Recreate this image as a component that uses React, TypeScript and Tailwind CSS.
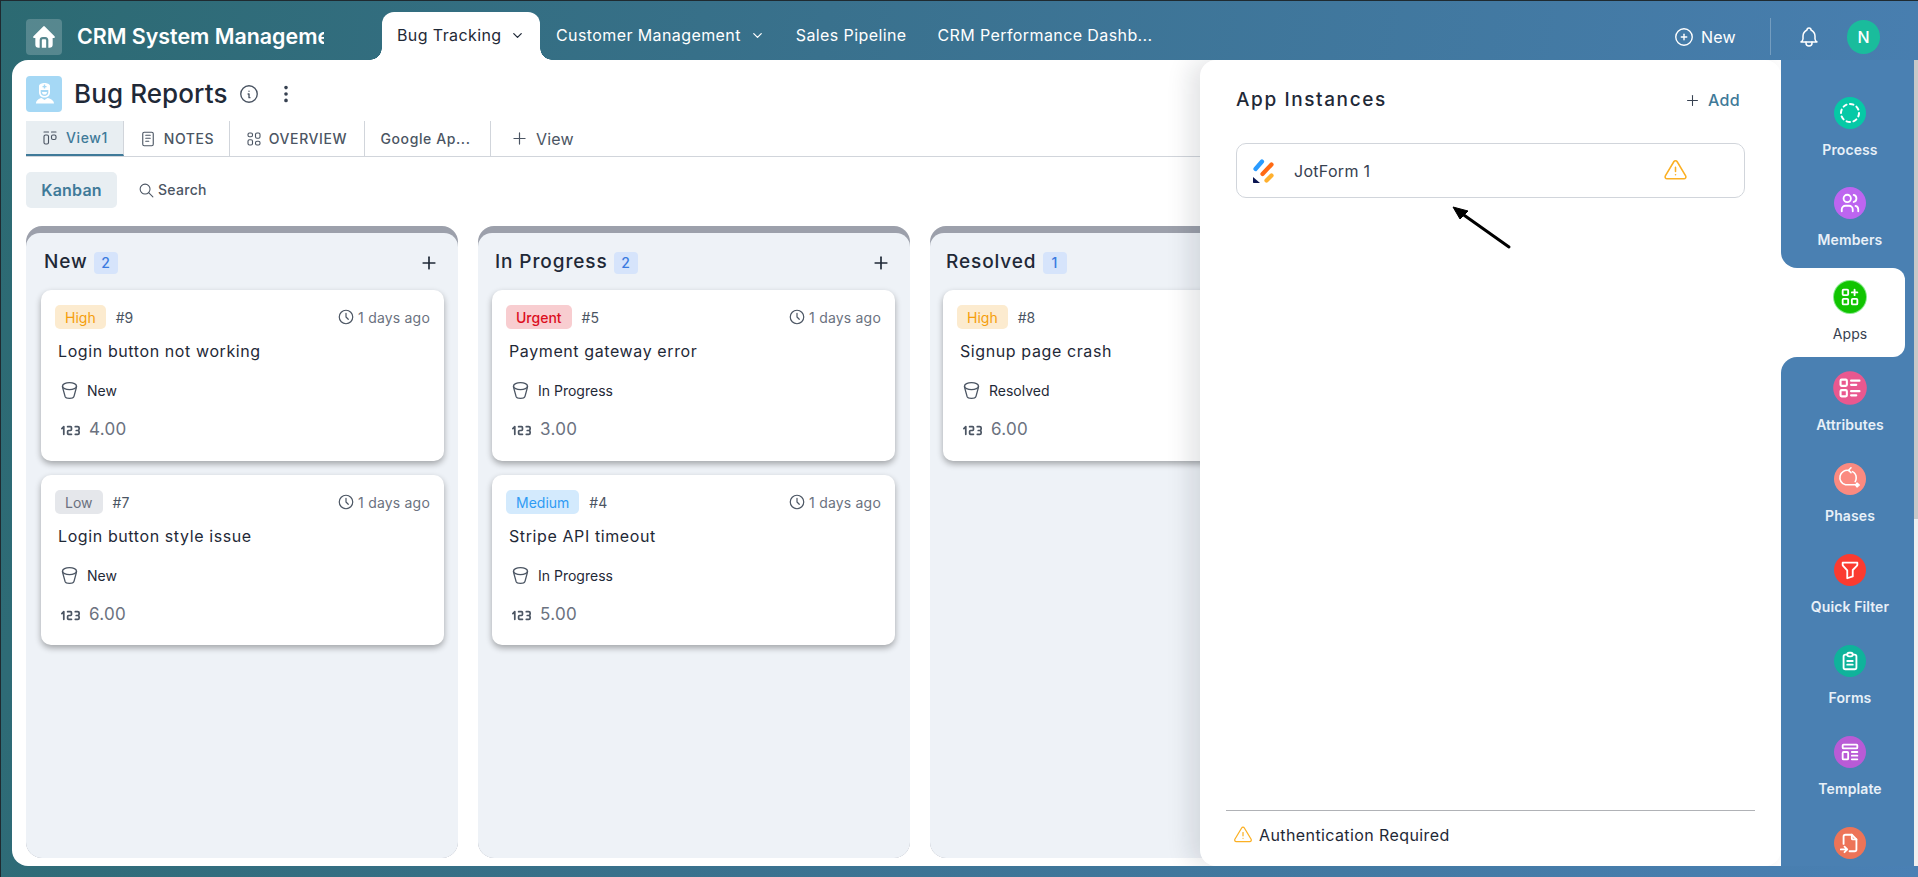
import React from "react";
import {
  TbAlertTriangle,
  TbApps,
  TbBell,
  TbBucket,
  TbChevronDown,
  TbCircleDashed,
  TbCirclePlus,
  TbClipboardText,
  TbClock,
  TbDotsVertical,
  TbFileImport,
  TbFilter,
  TbHomeFilled,
  TbInfoCircle,
  TbLayout2,
  TbLayoutKanban,
  TbListDetails,
  TbNotes,
  TbNumber123,
  TbPlus,
  TbSearch,
  TbTemplate,
  TbUsers,
} from "react-icons/tb";

type Card = { priority: string; chip: string; id: string; title: string; status: string; value: string };

const columns: { name: string; count: number; pad: string; cards: Card[] }[] = [
  {
    name: "New",
    count: 2,
    pad: "pl-[15px]",
    cards: [
      { priority: "High", chip: "bg-[#fcebcf] text-[#f59e0b]", id: "#9", title: "Login button not working", status: "New", value: "4.00" },
      { priority: "Low", chip: "bg-[#e5e7eb] text-[#6b7280]", id: "#7", title: "Login button style issue", status: "New", value: "6.00" },
    ],
  },
  {
    name: "In Progress",
    count: 2,
    pad: "pl-[14px]",
    cards: [
      { priority: "Urgent", chip: "bg-[#f8cdd0] font-medium text-[#dc0f1e]", id: "#5", title: "Payment gateway error", status: "In Progress", value: "3.00" },
      { priority: "Medium", chip: "bg-[#d3eafd] text-[#2f9bf4]", id: "#4", title: "Stripe API timeout", status: "In Progress", value: "5.00" },
    ],
  },
  {
    name: "Resolved",
    count: 1,
    pad: "pl-[13px]",
    cards: [{ priority: "High", chip: "bg-[#fcebcf] text-[#f59e0b]", id: "#8", title: "Signup page crash", status: "Resolved", value: "6.00" }],
  },
];

function NurseIcon() {
  return (
    <svg viewBox="0 0 36 36" className="h-9 w-9">
      <path d="M13 10 C13 8 16 7 18.5 7 C21 7 24 8 24 10 L24 16.5 C24 19.5 21.5 21.5 18.5 21.5 C15.5 21.5 13 19.5 13 16.5 Z" fill="#fff" />
      <path d="M14.7 14 H22.3 V16.5 C22.3 18.6 20.6 20 18.5 20 C16.4 20 14.7 18.6 14.7 16.5 Z" fill="#a5d8f5" />
      <path d="M16 16 H21 C21 17.6 20 18.6 18.5 18.6 C17 18.6 16 17.6 16 16 Z" fill="#fff" />
      <path d="M17.8 8.6 h1.4 v1.3 h1.3 v1.4 h-1.3 v1.3 h-1.4 v-1.3 h-1.3 v-1.4 h1.3 Z" fill="#a5d8f5" />
      <path d="M10 27.5 C10 24.5 12.5 22.8 15.5 22 L18.5 24 L21.5 22 C25 22.8 28 24.5 28 27.5 Z" fill="#fff" />
    </svg>
  );
}

function JotformLogo() {
  return (
    <svg viewBox="7 9 24 24" className="h-6 w-6 shrink-0">
      <path d="M10.5 19 L17 11.5" stroke="#2a9bff" strokeWidth="4.2" strokeLinecap="round" />
      <path d="M17.5 24 L26.5 14.5" stroke="#ff6a14" strokeWidth="4.2" strokeLinecap="round" />
      <path d="M21.5 30.5 L26.5 25.5" stroke="#ffb02e" strokeWidth="4.2" strokeLinecap="round" />
      <path d="M8 27 L8 32 C8 32.6 8.4 33 9 33 L15 33 Z" fill="#0a1551" />
    </svg>
  );
}

function PhasesIcon() {
  return (
    <svg viewBox="0 0 32 32" className="h-8 w-8" fill="none" stroke="currentColor" strokeWidth="1.6" strokeLinecap="round" strokeLinejoin="round">
      <path d="M15 7.5 A7 7 0 0 0 11.5 21.8 H22" />
      <path d="M18.5 8.6 A7 7 0 0 1 22.2 15 Q22.2 17 21.2 18.6" />
      <path d="M17 4.8 L14.6 7.3 L17 9.6" />
      <path d="M23 20.2 L25.2 22 L23 23.8 L21.8 22 Z" fill="currentColor" />
    </svg>
  );
}

function SideItem({ icon, color, label, className, active }: { icon: React.ReactNode; color: string; label?: string; className: string; active?: boolean }) {
  return (
    <div className={`flex flex-col items-center pl-[5px] ${className}`}>
      <span className={`flex h-8 w-8 shrink-0 items-center justify-center rounded-full text-white ${color}`}>{icon}</span>
      {label ? <span className={`mt-3 text-[14px] leading-[18px] tracking-[0.1px] ${active ? "font-normal text-[#374151]" : "font-semibold text-[#e8f0f8]"}`}>{label}</span> : null}
    </div>
  );
}

function KanbanCard({ card }: { card: Card }) {
  return (
    <div className="h-[171px] w-[403px] shrink-0 rounded-[10px] bg-white pl-[14px] pr-[14px] pt-[15px] shadow-[0_3px_6px_rgba(0,0,0,0.32)] even:h-[170px]">
      <div className="flex h-6 items-center">
        <span className={`flex h-6 items-center rounded-[5px] px-[10px] text-[14px] ${card.chip}`}>{card.priority}</span>
        <span className="ml-[10px] text-[14px] text-[#4b5563]">{card.id}</span>
        <TbClock className="ml-auto text-[#4b5563]" size={18} strokeWidth={1.6} />
        <span className="ml-[3px] text-[14px] tracking-[0.2px] text-[#6b7280]">1 days ago</span>
      </div>
      <p className="ml-[3px] mt-[10px] text-[16px] leading-[24px] tracking-[0.6px] text-[#1f2937]">{card.title}</p>
      <div className="ml-[4px] mt-[17px] flex h-5 items-center text-[14px] text-[#1f2937]">
        <TbBucket className="text-[#4b5563]" size={21} strokeWidth={1.5} />
        <span className="ml-[7px]">{card.status}</span>
      </div>
      <div className="ml-[4px] mt-5 flex h-5 items-center">
        <TbNumber123 className="text-[#4b5563]" size={23} strokeWidth={1.8} />
        <span className="ml-[7px] text-[17px] tracking-[0.3px] text-[#6b7280]">{card.value}</span>
      </div>
    </div>
  );
}

function KanbanColumn({ name, count, pad, cards }: { name: string; count: number; pad: string; cards: Card[] }) {
  return (
    <div className="flex h-[632px] w-[432px] shrink-0 flex-col rounded-[16px] bg-[#9ca0ab] pt-[7px]">
      <div className={`flex flex-1 flex-col rounded-[14px] rounded-b-[16px] bg-[#eef2f7] pr-[15px] ${pad}`}>
        <div className="flex h-[58px] shrink-0 items-center pl-[3px] pr-[4px] pt-[1px]">
          <span className="text-[19px] font-medium tracking-[0.9px] text-[#1f2937]">{name}</span>
          <span className="ml-[6px] flex h-[22px] min-w-[24px] items-center justify-center rounded-[4px] bg-[#d6e4fb] text-[14px] font-medium text-[#3b7be0]">{count}</span>
          <TbPlus className="ml-auto text-[#1f2937]" size={20} />
        </div>
        <div className="-mt-[1px] flex flex-col gap-[14px]">
          {cards.map((card) => (
            <KanbanCard key={card.id} card={card} />
          ))}
        </div>
      </div>
    </div>
  );
}

export default function App() {
  return (
    <div className="flex h-screen w-full flex-col overflow-hidden border-l border-t border-[#1f2a30] bg-[linear-gradient(100deg,#2c6a72_0%,#39718d_40%,#4a80b4_100%)] font-['Inter',sans-serif]">
      <header className="flex h-[59px] shrink-0 items-end pl-[25px] pr-[38px] text-white">
        <div className="mb-[5px] flex h-9 w-9 items-center justify-center self-end rounded-[4px] bg-white/20">
          <TbHomeFilled size={26} />
        </div>
        <div className="mb-[11px] ml-[15px] h-[26px] w-[247px] overflow-hidden whitespace-nowrap text-[21.4px] font-semibold leading-[26px]">CRM System Management</div>
        <nav className="ml-[58px] flex h-12 items-start text-[16px] tracking-[0.4px]">
          <div className="relative flex h-12 w-[158px] items-center rounded-t-[12px] bg-white pb-[2px] pl-[15px] text-[#1f2937]">
            <span className="absolute -left-3 bottom-0 h-3 w-3 bg-[radial-gradient(circle_at_0_0,transparent_11.5px,white_12px)]" />
            <span className="absolute -right-3 bottom-0 h-3 w-3 bg-[radial-gradient(circle_at_100%_0,transparent_11.5px,white_12px)]" />
            Bug Tracking
            <TbChevronDown className="ml-[8px]" size={15} />
          </div>
          <div className="ml-4 flex h-12 items-center pb-[2px]">
            Customer Management
            <TbChevronDown className="ml-[9px]" size={15} />
          </div>
          <div className="ml-[31px] flex h-12 items-center pb-[2px]">Sales Pipeline</div>
          <div className="ml-[31px] flex h-12 items-center pb-[2px]">CRM Performance Dashb...</div>
        </nav>
        <div className="mb-[5px] ml-auto flex h-[37px] items-center">
          <TbCirclePlus size={22} strokeWidth={1.5} />
          <span className="ml-[6px] text-[16px] tracking-[0.3px]">New</span>
          <span className="ml-[34px] h-[37px] w-px bg-white/25" />
          <TbBell className="ml-[26px]" size={24} strokeWidth={1.5} />
          <span className="ml-[26px] flex h-[34px] w-[33px] items-center justify-center rounded-full bg-[#1abc9c] text-[16px] font-medium">N</span>
        </div>
      </header>

      <div className="flex h-[806px] shrink-0 pl-[11px]">
        <main className="relative min-w-0 flex-1 overflow-hidden rounded-l-[16px] bg-white pl-[14px] pt-[16px]">
          <div className="flex h-9 items-center">
            <span className="flex h-9 w-9 items-center justify-center rounded-[4px] bg-[#a5d8f5]">
              <NurseIcon />
            </span>
            <h1 className="ml-[12px] text-[26px] font-medium leading-9 tracking-[0.1px] text-[#1f2937]">Bug Reports</h1>
            <TbInfoCircle className="ml-[10px] text-[#4b5563]" size={22} strokeWidth={1.5} />
            <TbDotsVertical className="ml-[15px] text-[#374151]" size={22} />
          </div>

          <div className="mt-[9px] flex h-[36px] items-stretch border-b border-[#d1d5db] text-[14px] font-medium tracking-[0.6px] text-[#4b5563]">
            <div className="flex w-[98px] items-center justify-center gap-[7px] border-b-2 border-r border-b-[#3f7a99] border-r-[#d1d5db] bg-[#e8eef2] text-[#3f7a99]">
              <TbLayoutKanban className="text-[#4b5563]" size={18} strokeWidth={1.5} />
              View1
            </div>
            <div className="flex w-[106px] items-center justify-center gap-[7px] border-r border-[#d1d5db]">
              <TbNotes size={18} strokeWidth={1.5} />
              NOTES
            </div>
            <div className="flex w-[135px] items-center justify-center gap-[6px] border-r border-[#d1d5db] pr-[2px]">
              <TbLayout2 size={18} strokeWidth={1.5} />
              OVERVIEW
            </div>
            <div className="flex w-[126px] items-center justify-center border-r border-[#d1d5db] pr-[4px]">Google Ap...</div>
            <div className="ml-[19px] flex items-center text-[16px] font-normal tracking-[0.2px]">
              <TbPlus size={19} strokeWidth={1.5} />
              <span className="ml-[7px]">View</span>
            </div>
          </div>

          <div className="mt-[15px] flex h-9 items-center">
            <span className="flex h-9 w-[91px] items-center justify-center rounded-[5px] bg-[#e8eef2] text-[16px] font-semibold tracking-[0.2px] text-[#3f7a99]">Kanban</span>
            <TbSearch className="ml-[21px] text-[#4b5563]" size={17} strokeWidth={1.5} />
            <span className="mb-[1px] ml-[3px] text-[14px] font-medium tracking-[0.3px] text-[#4b5563]">Search</span>
          </div>

          <div className="mt-[18px] flex gap-5">
            {columns.map((column) => (
              <KanbanColumn key={column.name} name={column.name} count={column.count} pad={column.pad} cards={column.cards} />
            ))}
          </div>

          {/* slide-over panel */}
          <aside className="absolute bottom-0 right-0 top-0 flex w-[581px] flex-col rounded-[16px] bg-white shadow-[-10px_0_24px_rgba(15,23,42,0.12)]">
            <div className="flex h-[66px] shrink-0 items-end justify-between pb-[12px] pl-[36px] pr-[41px]">
              <span className="text-[19px] font-medium tracking-[1.6px] text-[#1f2937]">App Instances</span>
              <span className="mb-[2px] flex items-center text-[16px] font-medium tracking-[0.3px] text-[#3f7a99]">
                <TbPlus className="text-[#374151]" size={17} strokeWidth={1.5} />
                <span className="ml-[7px]">Add</span>
              </span>
            </div>
            <div className="ml-[36px] mt-[17px] flex h-[55px] w-[509px] items-center rounded-[10px] border border-[#d1d5db] pl-[15px]">
              <JotformLogo />
              <span className="ml-[18px] text-[16px] tracking-[0.3px] text-[#374151]">JotForm 1</span>
              <TbAlertTriangle className="ml-[293px] text-[#fbb024]" size={25} strokeWidth={1.5} />
            </div>
            <svg viewBox="0 0 70 50" className="ml-[247px] mt-[5px] h-[50px] w-[70px]">
              <path d="M6 4 L21 8 L13 16 Z" fill="#000" stroke="#000" strokeWidth="1" />
              <path d="M14 10 L62 44" stroke="#000" strokeWidth="3" strokeLinecap="round" />
            </svg>
            <div className="mb-[1px] ml-[26px] mr-[26px] mt-auto flex h-[55px] items-center gap-[6px] border-t border-[#b0b2b6] pb-[7px] pl-[7px] text-[16px] tracking-[0.4px] text-[#1f2937]">
              <TbAlertTriangle className="text-[#fbb024]" size={20} strokeWidth={1.5} />
              Authentication Required
            </div>
          </aside>
        </main>

        <div className="flex w-[137px] shrink-0">
          <div className="flex w-[133px] flex-col bg-white">
            <div className="flex flex-col rounded-bl-[16px] bg-[#4a80b2]">
              <SideItem icon={<TbCircleDashed size={24} />} color="bg-[#06c9a6]" label="Process" className="h-[111px] pt-[37px]" />
              <SideItem icon={<TbUsers size={22} />} color="bg-[#bd65f0]" label="Members" className="h-[97px] pt-[16px]" />
            </div>
            <div className="flex h-[89px] bg-[#4a80b2]">
              <div className="w-[124px] rounded-r-[12px] bg-white">
                <SideItem icon={<TbApps size={22} />} color="bg-[#10c400] ring-1 ring-[#86e98a]" label="Apps" className="h-[89px] w-[133px] pt-[13px]" active />
              </div>
            </div>
            <div className="flex flex-1 flex-col overflow-hidden rounded-tl-[16px] bg-[#4a80b2]">
              <SideItem icon={<TbListDetails size={24} />} color="bg-[#e9588f] scale-105" label="Attributes" className="h-[91px] shrink-0 pt-[15px]" />
              <SideItem icon={<PhasesIcon />} color="bg-[#fb8a80]" label="Phases" className="h-[91px] shrink-0 pt-[15px]" />
              <SideItem icon={<TbFilter size={22} />} color="bg-[#fb3b30]" label="Quick Filter" className="h-[91px] shrink-0 pt-[15px]" />
              <SideItem icon={<TbClipboardText size={22} />} color="bg-[#0fb39b]" label="Forms" className="h-[91px] shrink-0 pt-[15px]" />
              <SideItem icon={<TbTemplate size={22} />} color="bg-[#b95bd6]" label="Template" className="h-[91px] shrink-0 pt-[15px]" />
              <SideItem icon={<TbFileImport size={22} />} color="bg-[#ed7458]" className="h-[91px] shrink-0 pt-[15px]" />
            </div>
          </div>
          <div className="w-1 bg-[#f0f0f0]">
            <div className="h-[459px] bg-[#c8c8c8]" />
          </div>
        </div>
      </div>
    </div>
  );
}
